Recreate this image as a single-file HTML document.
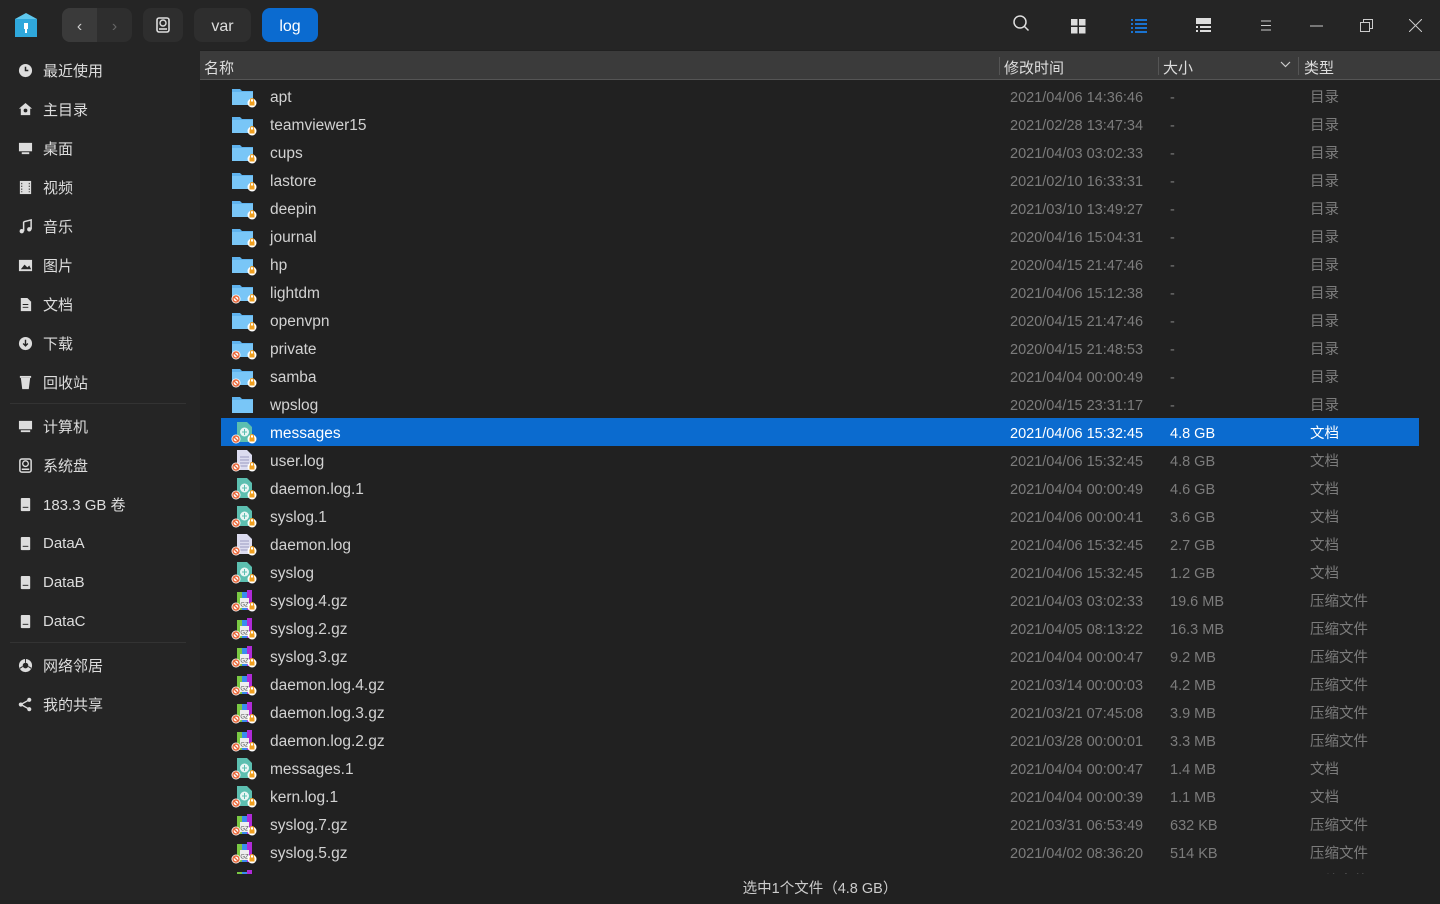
<!DOCTYPE html>
<html><head><meta charset="utf-8">
<style>
*{margin:0;padding:0;box-sizing:border-box}
body{width:1440px;height:900px;background:#212121;font-family:"Liberation Sans","Noto Sans CJK SC",sans-serif;color:#c8c8c8;position:relative;overflow:hidden}
.top{position:absolute;left:0;top:0;width:1440px;height:50px;background:#252525}
.side{position:absolute;left:0;top:50px;width:200px;height:850px;background:#252525}
.btn{position:absolute;top:8px;height:34px;border-radius:8px;background:#333;color:#ddd;font-size:16px;line-height:37px;text-align:center}
.si{position:absolute;left:18px;height:20px;font-size:15px;color:#ddd;display:flex;align-items:center}
.si svg{width:15px;height:15px;margin-right:10px}
.sep{position:absolute;left:10px;width:176px;height:1px;background:#333}
.hdr{position:absolute;left:200px;top:51px;width:1240px;height:29px;background:#3b3b3b;border-bottom:1px solid #555;font-size:15px;color:#ddd}
.hdr span{position:absolute;top:6px}
.list{position:absolute;left:200px;top:82px;width:1240px;height:792px;overflow:hidden}
.r{position:relative;height:28px;font-size:15.5px}
.r>*{position:absolute;top:0;line-height:32px}
.r .n{left:70px;color:#d2d2d2}
.r .d{left:810px;color:#7c7c7c;font-size:14.5px}
.r .s{left:970px;color:#7c7c7c;font-size:14.5px}
.r .t{left:1110px;color:#7c7c7c;font-size:14.5px}
.r svg{left:31px;top:4px;width:26px;height:22px}
.r.sel{background:#0b6bcf;margin-left:21px;width:1198px}
.r.sel>*{margin-left:-21px}
.r.sel .n,.r.sel .d,.r.sel .s,.r.sel .t{color:#fff}
.stat{position:absolute;left:200px;top:874px;width:1240px;height:26px;background:#212121;text-align:center;font-size:14.5px;color:#ccc;line-height:30px}
.ti{position:absolute;top:14px}
</style></head><body>
<svg width="0" height="0" style="position:absolute">
<defs>
<symbol id="fold" viewBox="0 0 26 22"><path d="M1 3h8l2 2h11v14H1z" fill="#5fb3ee"/><path d="M1 6h21v13H1z" fill="#79c6f7"/></symbol>
<symbol id="lock" viewBox="0 0 26 22"><circle cx="21" cy="17" r="4.5" fill="#fff"/><rect x="18.5" y="15.5" width="5" height="4" fill="#f0a020"/><path d="M19.5 15.5v-1.5a1.5 1.5 0 0 1 3 0v1.5" stroke="#f0a020" fill="none"/></symbol>
<symbol id="no" viewBox="0 0 26 22"><circle cx="5" cy="17" r="4.5" fill="#fff"/><circle cx="5" cy="17" r="3" fill="none" stroke="#e8673a" stroke-width="1.4"/><path d="M3 15l4 4" stroke="#e8673a" stroke-width="1.3"/></symbol>
<symbol id="doc" viewBox="0 0 26 22"><path d="M6 0h10l5 5v15H6z" fill="#5cbfb0"/><circle cx="13.5" cy="10" r="4.5" fill="#e8f6f4"/><path d="M11 10h5M13.5 7v6" stroke="#5cbfb0"/></symbol>
<symbol id="txt" viewBox="0 0 26 22"><path d="M6 0h10l5 5v15H6z" fill="#dcdcf0"/><path d="M9 7h9M9 10h9M9 13h9M9 16h9" stroke="#9a9ac0"/></symbol>
<symbol id="gz" viewBox="0 0 26 22"><rect x="6" y="2" width="5" height="18" fill="#7ac943"/><rect x="11" y="2" width="5" height="18" fill="#3a8cf0"/><rect x="16" y="0" width="5" height="20" fill="#b02ad8"/><rect x="9" y="8" width="9" height="10" fill="#eee"/><text x="13.5" y="16.5" font-size="6" text-anchor="middle" fill="#555" font-family="Liberation Sans">GZ</text></symbol>
</defs></svg>

<div class="top"></div>
<svg style="position:absolute;left:13px;top:11px" width="26" height="28" viewBox="0 0 26 28"><path d="M2 8L13 2l11 6v18H2z" fill="#5fc8ee"/><path d="M2 8h22v18H2z" fill="#2fa8dc"/><rect x="11" y="12" width="4" height="6" fill="#fff"/><path d="M13 18v4" stroke="#fff" stroke-width="2"/></svg>
<div class="btn" style="left:62px;width:70px;background:#2e2e2e"></div>
<div class="btn" style="left:62px;width:35px;background:#3a3a3a;border-radius:8px 0 0 8px;color:#ccc">‹</div>
<div class="btn" style="left:97px;width:35px;background:transparent;color:#666">›</div>
<div class="btn" style="left:143px;width:40px;background:#2e2e2e"><svg width="14" height="16" viewBox="0 0 14 16" style="margin-top:9px"><rect x="1" y="1" width="12" height="14" rx="2" fill="none" stroke="#ddd" stroke-width="1.6"/><circle cx="7" cy="6" r="3" fill="none" stroke="#ddd" stroke-width="1.4"/><path d="M3 12h8" stroke="#ddd" stroke-width="1.6"/></svg></div>
<div class="btn" style="left:194px;width:57px;background:#2e2e2e">var</div>
<div class="btn" style="left:262px;width:56px;background:#0b6bd0;color:#fff">log</div>
<svg class="ti" style="left:1012px" width="18" height="20" viewBox="0 0 18 20"><circle cx="8" cy="8" r="6" fill="none" stroke="#ddd" stroke-width="1.5"/><path d="M12.5 12.5l4 4" stroke="#ddd" stroke-width="1.5"/></svg>
<svg class="ti" style="left:1071px;top:19px" width="15" height="15"><rect x="0" y="0" width="6.5" height="6.5" fill="#ddd"/><rect x="8" y="0" width="6.5" height="6.5" fill="#ddd"/><rect x="0" y="8" width="6.5" height="6.5" fill="#ddd"/><rect x="8" y="8" width="6.5" height="6.5" fill="#ddd"/></svg>
<svg class="ti" style="left:1131px;top:18px" width="16" height="16"><g fill="#1a73d0"><rect x="0" y="1" width="2" height="2"/><rect x="4" y="1" width="12" height="2"/><rect x="0" y="5" width="2" height="2"/><rect x="4" y="5" width="12" height="2"/><rect x="0" y="9" width="2" height="2"/><rect x="4" y="9" width="12" height="2"/><rect x="0" y="13" width="2" height="2"/><rect x="4" y="13" width="12" height="2"/></g></svg>
<svg class="ti" style="left:1196px;top:18px" width="15" height="16"><g fill="#ddd"><rect x="0" y="0" width="15" height="6"/><rect x="0" y="8" width="2" height="2"/><rect x="4" y="8" width="11" height="2"/><rect x="0" y="12" width="2" height="2"/><rect x="4" y="12" width="11" height="2"/></g></svg>
<svg class="ti" style="left:1260px;top:20px" width="12" height="11"><path d="M1 1h10M1 5.5h10M1 10h10" stroke="#ccc"/></svg>
<svg class="ti" style="left:1310px;top:25px" width="13" height="2"><path d="M0 1h13" stroke="#ccc"/></svg>
<svg class="ti" style="left:1360px;top:19px" width="13" height="14"><rect x="0.5" y="3.5" width="9" height="9" fill="none" stroke="#ccc"/><path d="M3.5 3.5v-3h9v9h-3" fill="none" stroke="#ccc"/></svg>
<svg class="ti" style="left:1409px;top:19px" width="13" height="13"><path d="M0 0l13 13M13 0L0 13" stroke="#ccc"/></svg>

<div class="side"></div>
<div class="si" style="top:60px"><svg viewBox="0 0 16 16"><circle cx="8" cy="8" r="7" fill="#ddd"/><path d="M8 4v4h3" stroke="#252525" stroke-width="1.6" fill="none"/></svg>最近使用</div>
<div class="si" style="top:99px"><svg viewBox="0 0 16 16"><path d="M8 1l7 6h-2v7H3V7H1z" fill="#ddd"/><circle cx="8" cy="9" r="2" fill="#252525"/></svg>主目录</div>
<div class="si" style="top:138px"><svg viewBox="0 0 16 16"><rect x="1" y="2" width="14" height="9" fill="#ddd"/><rect x="4" y="12" width="8" height="2" fill="#ddd"/></svg>桌面</div>
<div class="si" style="top:177px"><svg viewBox="0 0 16 16"><rect x="2" y="1" width="12" height="14" fill="#ddd"/><path d="M4 3v10M12 3v10" stroke="#252525" stroke-dasharray="1.5 1.5"/></svg>视频</div>
<div class="si" style="top:216px"><svg viewBox="0 0 16 16"><path d="M6 3l8-2v10" stroke="#ddd" stroke-width="1.6" fill="none"/><path d="M6 3v10" stroke="#ddd" stroke-width="1.6"/><circle cx="4" cy="13" r="2.3" fill="#ddd"/><circle cx="12" cy="11" r="2.3" fill="#ddd"/></svg>音乐</div>
<div class="si" style="top:255px"><svg viewBox="0 0 16 16"><rect x="1" y="2" width="14" height="12" fill="#ddd"/><path d="M3 12l4-5 3 3 2-2 2 4z" fill="#252525"/></svg>图片</div>
<div class="si" style="top:294px"><svg viewBox="0 0 16 16"><path d="M3 1h7l4 4v10H3z" fill="#ddd"/><path d="M5 8h6M5 11h6" stroke="#252525"/></svg>文档</div>
<div class="si" style="top:333px"><svg viewBox="0 0 16 16"><circle cx="8" cy="8" r="7" fill="#ddd"/><path d="M8 4v6M5.5 8l2.5 2.5L10.5 8" stroke="#252525" stroke-width="1.5" fill="none"/></svg>下载</div>
<div class="si" style="top:372px"><svg viewBox="0 0 16 16"><path d="M3 3h10l-1.5 12h-7z" fill="#ddd"/><rect x="2" y="1" width="12" height="2" fill="#ddd"/></svg>回收站</div>
<div class="sep" style="top:403px"></div>
<div class="si" style="top:416px"><svg viewBox="0 0 16 16"><rect x="1" y="2" width="14" height="9" fill="#ddd"/><rect x="3" y="12" width="10" height="2" fill="#ddd"/></svg>计算机</div>
<div class="si" style="top:455px"><svg viewBox="0 0 16 16"><rect x="2" y="1" width="12" height="14" rx="2" fill="none" stroke="#ddd" stroke-width="1.6"/><circle cx="8" cy="6" r="3" fill="none" stroke="#ddd" stroke-width="1.4"/><path d="M4 12h8" stroke="#ddd" stroke-width="1.6"/></svg>系统盘</div>
<div class="si" style="top:494px"><svg viewBox="0 0 16 16"><rect x="3" y="1" width="10" height="14" rx="1" fill="#ddd"/><path d="M5 11h6" stroke="#252525"/></svg>183.3 GB 卷</div>
<div class="si" style="top:533px"><svg viewBox="0 0 16 16"><rect x="3" y="1" width="10" height="14" rx="1" fill="#ddd"/><path d="M5 11h6" stroke="#252525"/></svg>DataA</div>
<div class="si" style="top:572px"><svg viewBox="0 0 16 16"><rect x="3" y="1" width="10" height="14" rx="1" fill="#ddd"/><path d="M5 11h6" stroke="#252525"/></svg>DataB</div>
<div class="si" style="top:611px"><svg viewBox="0 0 16 16"><rect x="3" y="1" width="10" height="14" rx="1" fill="#ddd"/><path d="M5 11h6" stroke="#252525"/></svg>DataC</div>
<div class="sep" style="top:642px"></div>
<div class="si" style="top:655px"><svg viewBox="0 0 16 16"><circle cx="8" cy="8" r="7" fill="#ddd"/><circle cx="8" cy="8" r="3" fill="#252525"/><path d="M8 1v4M2 11l3-2M14 11l-3-2" stroke="#252525"/></svg>网络邻居</div>
<div class="si" style="top:694px"><svg viewBox="0 0 16 16"><circle cx="12" cy="3" r="2.2" fill="#ddd"/><circle cx="3" cy="8" r="2.2" fill="#ddd"/><circle cx="12" cy="13" r="2.2" fill="#ddd"/><path d="M12 3L3 8l9 5" stroke="#ddd" stroke-width="1.5" fill="none"/></svg>我的共享</div>

<div class="hdr">
<span style="left:4px">名称</span>
<div style="position:absolute;left:799px;top:6px;width:1px;height:18px;background:#555"></div>
<span style="left:804px">修改时间</span>
<div style="position:absolute;left:958px;top:6px;width:1px;height:18px;background:#555"></div>
<span style="left:963px">大小</span>
<svg style="position:absolute;left:1080px;top:10px" width="11" height="7"><path d="M1 1l4.5 4.5L10 1" stroke="#ccc" fill="none" stroke-width="1.2"/></svg>
<div style="position:absolute;left:1098px;top:6px;width:1px;height:18px;background:#555"></div>
<span style="left:1104px">类型</span>
</div>

<div class="list">
<div class="r"><svg><use href="#fold"/><use href="#lock"/></svg><span class="n">apt</span><span class="d">2021/04/06 14:36:46</span><span class="s">-</span><span class="t">目录</span></div>
<div class="r"><svg><use href="#fold"/><use href="#lock"/></svg><span class="n">teamviewer15</span><span class="d">2021/02/28 13:47:34</span><span class="s">-</span><span class="t">目录</span></div>
<div class="r"><svg><use href="#fold"/><use href="#lock"/></svg><span class="n">cups</span><span class="d">2021/04/03 03:02:33</span><span class="s">-</span><span class="t">目录</span></div>
<div class="r"><svg><use href="#fold"/><use href="#lock"/></svg><span class="n">lastore</span><span class="d">2021/02/10 16:33:31</span><span class="s">-</span><span class="t">目录</span></div>
<div class="r"><svg><use href="#fold"/><use href="#lock"/></svg><span class="n">deepin</span><span class="d">2021/03/10 13:49:27</span><span class="s">-</span><span class="t">目录</span></div>
<div class="r"><svg><use href="#fold"/><use href="#lock"/></svg><span class="n">journal</span><span class="d">2020/04/16 15:04:31</span><span class="s">-</span><span class="t">目录</span></div>
<div class="r"><svg><use href="#fold"/><use href="#lock"/></svg><span class="n">hp</span><span class="d">2020/04/15 21:47:46</span><span class="s">-</span><span class="t">目录</span></div>
<div class="r"><svg><use href="#fold"/><use href="#no"/><use href="#lock"/></svg><span class="n">lightdm</span><span class="d">2021/04/06 15:12:38</span><span class="s">-</span><span class="t">目录</span></div>
<div class="r"><svg><use href="#fold"/><use href="#lock"/></svg><span class="n">openvpn</span><span class="d">2020/04/15 21:47:46</span><span class="s">-</span><span class="t">目录</span></div>
<div class="r"><svg><use href="#fold"/><use href="#no"/><use href="#lock"/></svg><span class="n">private</span><span class="d">2020/04/15 21:48:53</span><span class="s">-</span><span class="t">目录</span></div>
<div class="r"><svg><use href="#fold"/><use href="#no"/><use href="#lock"/></svg><span class="n">samba</span><span class="d">2021/04/04 00:00:49</span><span class="s">-</span><span class="t">目录</span></div>
<div class="r"><svg><use href="#fold"/></svg><span class="n">wpslog</span><span class="d">2020/04/15 23:31:17</span><span class="s">-</span><span class="t">目录</span></div>
<div class="r sel"><svg><use href="#doc"/><use href="#no"/><use href="#lock"/></svg><span class="n">messages</span><span class="d">2021/04/06 15:32:45</span><span class="s">4.8 GB</span><span class="t">文档</span></div>
<div class="r"><svg><use href="#txt"/><use href="#no"/><use href="#lock"/></svg><span class="n">user.log</span><span class="d">2021/04/06 15:32:45</span><span class="s">4.8 GB</span><span class="t">文档</span></div>
<div class="r"><svg><use href="#doc"/><use href="#no"/><use href="#lock"/></svg><span class="n">daemon.log.1</span><span class="d">2021/04/04 00:00:49</span><span class="s">4.6 GB</span><span class="t">文档</span></div>
<div class="r"><svg><use href="#doc"/><use href="#no"/><use href="#lock"/></svg><span class="n">syslog.1</span><span class="d">2021/04/06 00:00:41</span><span class="s">3.6 GB</span><span class="t">文档</span></div>
<div class="r"><svg><use href="#txt"/><use href="#no"/><use href="#lock"/></svg><span class="n">daemon.log</span><span class="d">2021/04/06 15:32:45</span><span class="s">2.7 GB</span><span class="t">文档</span></div>
<div class="r"><svg><use href="#doc"/><use href="#no"/><use href="#lock"/></svg><span class="n">syslog</span><span class="d">2021/04/06 15:32:45</span><span class="s">1.2 GB</span><span class="t">文档</span></div>
<div class="r"><svg><use href="#gz"/><use href="#no"/><use href="#lock"/></svg><span class="n">syslog.4.gz</span><span class="d">2021/04/03 03:02:33</span><span class="s">19.6 MB</span><span class="t">压缩文件</span></div>
<div class="r"><svg><use href="#gz"/><use href="#no"/><use href="#lock"/></svg><span class="n">syslog.2.gz</span><span class="d">2021/04/05 08:13:22</span><span class="s">16.3 MB</span><span class="t">压缩文件</span></div>
<div class="r"><svg><use href="#gz"/><use href="#no"/><use href="#lock"/></svg><span class="n">syslog.3.gz</span><span class="d">2021/04/04 00:00:47</span><span class="s">9.2 MB</span><span class="t">压缩文件</span></div>
<div class="r"><svg><use href="#gz"/><use href="#no"/><use href="#lock"/></svg><span class="n">daemon.log.4.gz</span><span class="d">2021/03/14 00:00:03</span><span class="s">4.2 MB</span><span class="t">压缩文件</span></div>
<div class="r"><svg><use href="#gz"/><use href="#no"/><use href="#lock"/></svg><span class="n">daemon.log.3.gz</span><span class="d">2021/03/21 07:45:08</span><span class="s">3.9 MB</span><span class="t">压缩文件</span></div>
<div class="r"><svg><use href="#gz"/><use href="#no"/><use href="#lock"/></svg><span class="n">daemon.log.2.gz</span><span class="d">2021/03/28 00:00:01</span><span class="s">3.3 MB</span><span class="t">压缩文件</span></div>
<div class="r"><svg><use href="#doc"/><use href="#no"/><use href="#lock"/></svg><span class="n">messages.1</span><span class="d">2021/04/04 00:00:47</span><span class="s">1.4 MB</span><span class="t">文档</span></div>
<div class="r"><svg><use href="#doc"/><use href="#no"/><use href="#lock"/></svg><span class="n">kern.log.1</span><span class="d">2021/04/04 00:00:39</span><span class="s">1.1 MB</span><span class="t">文档</span></div>
<div class="r"><svg><use href="#gz"/><use href="#no"/><use href="#lock"/></svg><span class="n">syslog.7.gz</span><span class="d">2021/03/31 06:53:49</span><span class="s">632 KB</span><span class="t">压缩文件</span></div>
<div class="r"><svg><use href="#gz"/><use href="#no"/><use href="#lock"/></svg><span class="n">syslog.5.gz</span><span class="d">2021/04/02 08:36:20</span><span class="s">514 KB</span><span class="t">压缩文件</span></div>
<div class="r"><svg><use href="#gz"/><use href="#no"/><use href="#lock"/></svg><span class="n">syslog.6.gz</span><span class="d">2021/04/01 00:00:40</span><span class="s">498 KB</span><span class="t">压缩文件</span></div>
</div>
<div class="stat">选中1个文件（4.8 GB）</div>
</body></html>
